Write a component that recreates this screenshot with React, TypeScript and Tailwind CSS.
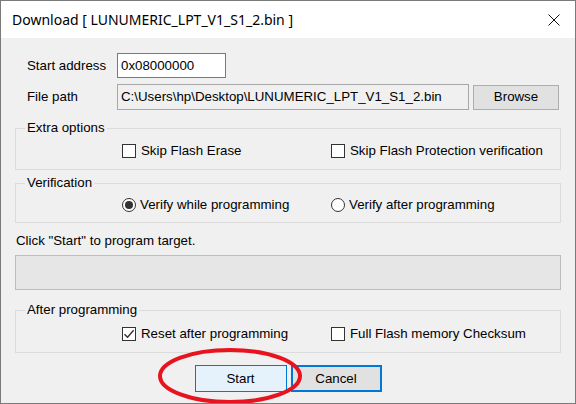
import React from 'react';

const font = { fontFamily: '"Liberation Sans", Arial, sans-serif' };

const CheckBox: React.FC<{ checked?: boolean; label: string }> = ({ checked, label }) => (
  <div className="flex items-center h-[20px]">
    <div className="w-[14px] h-[14px] bg-white border border-[#333333] flex items-center justify-center">
      {checked && (
        <svg width="12" height="12" viewBox="0 0 12 12">
          <path d="M1.5 6.2 L4.6 9.3 L10.6 2.3" fill="none" stroke="#333333" strokeWidth="1.4" />
        </svg>
      )}
    </div>
    <span className="ml-[5px] leading-none">{label}</span>
  </div>
);

const Radio: React.FC<{ checked?: boolean; label: string }> = ({ checked, label }) => (
  <div className="flex items-center h-[20px]">
    <div className="w-[14px] h-[14px] rounded-full bg-white border border-[#333333] flex items-center justify-center">
      {checked && <div className="w-[8px] h-[8px] rounded-full bg-[#333333]" />}
    </div>
    <span className="ml-[4px] leading-none">{label}</span>
  </div>
);

const Group: React.FC<{ title: string; className?: string; children: React.ReactNode }> = ({
  title,
  className,
  children,
}) => (
  <fieldset className={`border border-[#dcdcdc] ${className ?? ''}`}>
    <legend className="ml-[9px] px-[2px] leading-[16px]">{title}</legend>
    {children}
  </fieldset>
);

export default function App() {
  return (
    <div
      className="relative w-[576px] h-[404px] bg-[#f0f0f0] border border-[#7a7a7a] flex flex-col text-[13.3px] text-black overflow-hidden"
      style={font}
    >
      {/* title bar */}
      <div className="h-[37px] bg-white flex items-center pl-[11px] pr-[15px] shrink-0">
        <span className="text-[14px] text-black" style={{ fontFamily: '"Segoe UI", "Noto Sans", sans-serif' }}>
          Download [ LUNUMERIC_LPT_V1_S1_2.bin ]
        </span>
        <svg className="ml-auto" width="12" height="12" viewBox="0 0 12 12">
          <path d="M0.5 0.5 L11.5 11.5 M11.5 0.5 L0.5 11.5" stroke="#111111" strokeWidth="1" />
        </svg>
      </div>

      <div className="px-[14px] flex flex-col">
        <div className="mt-[15px] flex items-center h-[25px]">
          <span className="w-[102px] pl-[12px]">Start address</span>
          <div className="w-[109px] h-[25px] bg-white border border-[#7a7a7a] flex items-center px-[3px]">
            0x08000000
          </div>
        </div>

        <div className="mt-[6px] flex items-center h-[26px]">
          <span className="w-[102px] pl-[12px]">File path</span>
          <div className="w-[352px] h-[26px] bg-[#f0f0f0] border border-[#a8a8a8] flex items-center px-[3px]">
            C:\Users\hp\Desktop\LUNUMERIC_LPT_V1_S1_2.bin
          </div>
          <button className="ml-[4px] w-[86px] h-[25px] bg-[#e1e1e1] border border-[#adadad] flex items-center justify-center">
            Browse
          </button>
        </div>

        <Group title="Extra options" className="mt-[10px]">
          <div className="flex pl-[106px] mt-[5px] mb-[8px]">
            <div className="w-[209px]">
              <CheckBox label="Skip Flash Erase" />
            </div>
            <CheckBox label="Skip Flash Protection verification" />
          </div>
        </Group>

        <Group title="Verification" className="mt-[5px]">
          <div className="flex pl-[106px] mt-[4px] mb-[7px]">
            <div className="w-[209px]">
              <Radio checked label="Verify while programming" />
            </div>
            <Radio label="Verify after programming" />
          </div>
        </Group>

        <div className="mt-[10px] h-[16px] leading-[16px] pl-[1px]">Click "Start" to program target.</div>

        <div className="mt-[6px] h-[35px] bg-[#e6e6e6] border border-[#bcbcbc]" />

        <Group title="After programming" className="mt-[12px]">
          <div className="flex pl-[106px] mt-[6px] mb-[8px]">
            <div className="w-[209px]">
              <CheckBox checked label="Reset after programming" />
            </div>
            <CheckBox label="Full Flash memory Checksum" />
          </div>
        </Group>

        <div className="mt-[12px] flex justify-center gap-[4px]">
          <button className="w-[92px] h-[27px] bg-[#e5f1fb] border border-[#0078d7] flex items-center justify-center">
            Start
          </button>
          <button className="w-[91px] h-[27px] bg-[#e1e1e1] border-2 border-[#0078d7] flex items-center justify-center">
            Cancel
          </button>
        </div>
      </div>

      {/* red annotation ellipse */}
      <svg className="absolute left-0 top-0 pointer-events-none" width="576" height="404">
        <ellipse cx="229" cy="375" rx="70" ry="26" fill="none" stroke="#e8131e" strokeWidth="4" />
      </svg>
    </div>
  );
}
